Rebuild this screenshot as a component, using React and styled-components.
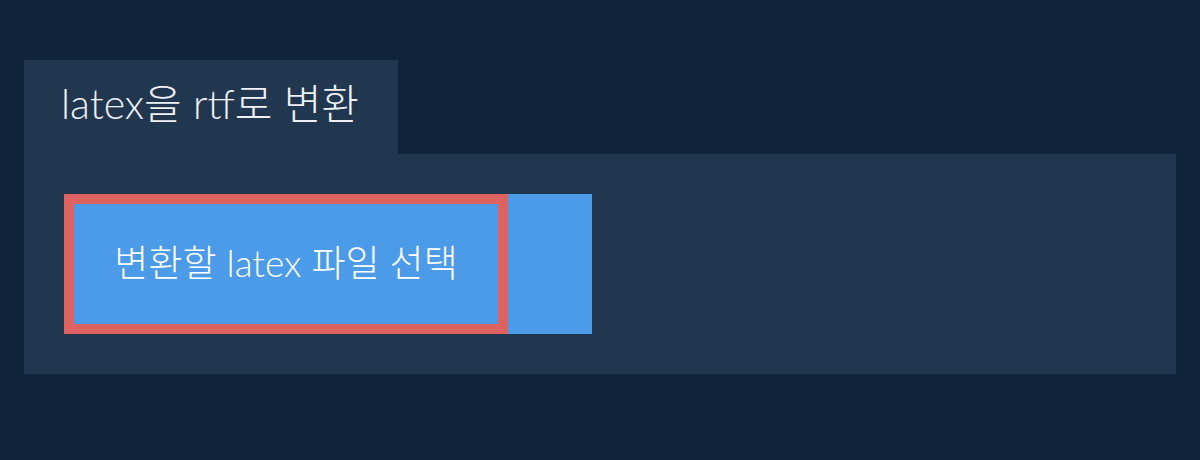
import React from "react";
import styled, { createGlobalStyle } from "styled-components";

const Global = createGlobalStyle`
  html, body { margin: 0; padding: 0; background: #0f243a; }
  body { font-family: Lato, "Noto Sans CJK KR", sans-serif; }
`;

const Page = styled.div`
  width: 1200px;
  height: 460px;
  box-sizing: border-box;
  padding: 60px 24px 0 24px;
  display: flex;
  flex-direction: column;
  align-items: flex-start;
`;

const Tab = styled.div`
  width: 374px;
  height: 94px;
  box-sizing: border-box;
  padding: 0 0 8px 37px;
  background: #21364f;
  color: #eef2f6;
  font-size: 41px;
  font-weight: 300;
  line-height: 1;
  display: flex;
  align-items: center;
  white-space: nowrap;
`;

const Panel = styled.div`
  align-self: stretch;
  background: #21364f;
  padding: 40px;
  display: flex;
`;

const UploadGroup = styled.div`
  display: flex;
  background: #4c9be8;
  width: 528px;
  height: 140px;
`;

const SelectButton = styled.button`
  width: 444px;
  height: 140px;
  box-sizing: border-box;
  border: 10px solid #dd6260;
  background: #4c9be8;
  color: #ffffff;
  font-family: Lato, "Noto Sans CJK KR", sans-serif;
  font-size: 37px;
  font-weight: 300;
  line-height: 1;
  padding: 0 0 4px 0;
  cursor: pointer;
`;

export default function App() {
  return (
    <>
      <Global />
      <Page>
        <Tab>latex을 rtf로 변환</Tab>
        <Panel>
          <UploadGroup>
            <SelectButton>변환할 latex 파일 선택</SelectButton>
          </UploadGroup>
        </Panel>
      </Page>
    </>
  );
}
